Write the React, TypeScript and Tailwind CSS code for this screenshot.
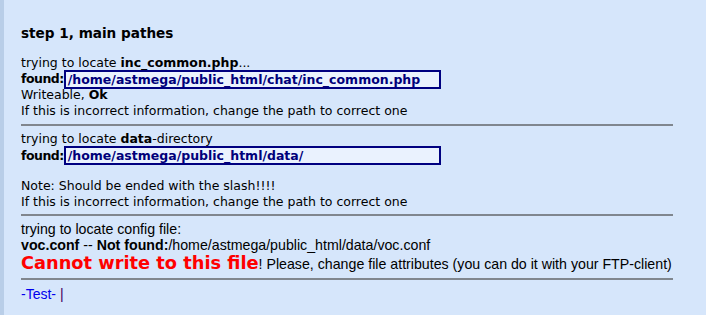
const PathBox = ({ value }: { value: string }) => (
  <span className="inline-block w-[377px] h-[19px] border-2 border-[#000080] bg-[#eaf2fe] px-[2px] align-middle font-bold text-[#00007a] leading-[15px]">
    {value}
  </span>
);

const Rule = ({ className }: { className: string }) => (
  <div className={"h-[2px] bg-[#80868e] w-[652px] " + className} />
);

const App = () => {
  return (
    <div className="w-[706px] h-[315px] bg-[#d6e6fb] border-l-4 border-[#b9cee8] text-black text-[12.5px] leading-[16px] font-['DejaVu_Sans',Verdana,sans-serif] overflow-hidden">
      <div className="pl-[17px] pt-[24px]">
        <div className="text-[13.6px] font-bold leading-[18px]">step 1, main pathes</div>

        <div className="mt-[13px]">
          trying to locate <b>inc_common.php</b>...
        </div>
        <div className="h-[16px] flex items-center">
          <b className="tracking-[-0.5px]">found:</b>
          <PathBox value="/home/astmega/public_html/chat/inc_common.php" />
        </div>
        <div>
          Writeable, <b>Ok</b>
        </div>
        <div>If this is incorrect information, change the path to correct one</div>

        <Rule className="mt-[5px] mb-[5px]" />

        <div>
          trying to locate <b>data</b>-directory
        </div>
        <div className="h-[17px] flex items-center">
          <b className="tracking-[-0.5px]">found:</b>
          <PathBox value="/home/astmega/public_html/data/" />
        </div>
        <div className="mt-[14px]">Note: Should be ended with the slash!!!!</div>
        <div>If this is incorrect information, change the path to correct one</div>

        <Rule className="mt-[4px] mb-[5px]" />

        <div className="font-['Liberation_Sans',Tahoma,sans-serif] text-[14.2px]">
          <div>trying to locate config file:</div>
          <div>
            <b>voc.conf</b> -- <b>Not found:</b>/home/astmega/public_html/data/voc.conf
          </div>
          <div className="leading-[20px]">
            <span className="text-[#ff0000] font-bold text-[17.8px] font-['DejaVu_Sans',Verdana,sans-serif]">
              Cannot write to this file
            </span>
            ! Please, change file attributes (you can do it with your FTP-client)
          </div>
        </div>

        <Rule className="mt-[4px] mb-[6px]" />

        <div className="font-['Liberation_Sans',Tahoma,sans-serif] text-[14px] text-[#0000ee]">
          -Test- <span className="text-[#400060]">|</span>
        </div>
      </div>
    </div>
  );
};

export default App;
